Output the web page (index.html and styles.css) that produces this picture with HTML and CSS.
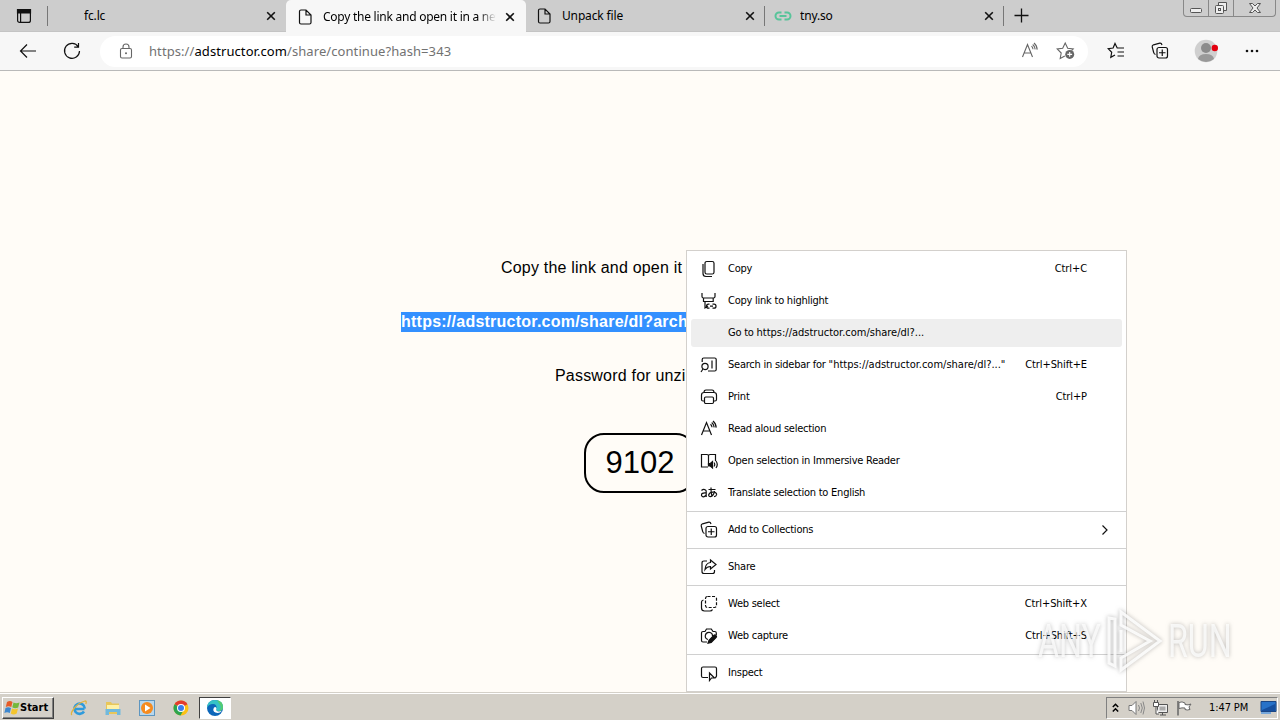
FILE: index.html
```html
<!DOCTYPE html>
<html lang="en">
<head>
    <meta charset="UTF-8">
    <meta name="viewport" content="width=device-width, initial-scale=1.0">
    <title>Copy the link and open it in a new tab</title>
    <link rel="stylesheet" href="styles.css">
</head>
<body>
    <svg class="sprite" aria-hidden="true">
        <symbol id="page" viewBox="0 0 14 16"><path d="M1.5 2.5a1.5 1.5 0 0 1 1.500-1.500h5l5 5v7.500a1.500 1.500 0 0 1-1.500 1.500H3a1.500 1.500 0 0 1-1.500-1.500zM8 1v5h5"/></symbol>
        <symbol id="close" viewBox="0 0 10 10"><path d="M1.200 1.200l7.600 7.600M8.800 1.200L1.200 8.800"/></symbol>
        <symbol id="aloud" viewBox="0 0 18 18"><path d="M1.500 15L6.500 2.500 11.500 15M3.200 11h6.600M10.500 4.200q1.400 1.200 1.500 3M11.700 2.500q2.300 1.800 2.500 4.900M13 1q3 2.500 3.200 6.600"/></symbol>
        <symbol id="collections" viewBox="0 0 18 18"><path d="M4.500 12.500Q3 12 2.700 10.500L1.200 4.800Q1 3.300 2.500 2.800L8.800 1.200Q10.500 1 11 3M8 5.500h6.500a2 2 0 0 1 2 2V14a2 2 0 0 1-2 2H8a2 2 0 0 1-2-2V7.500a2 2 0 0 1 2-2zM11.250 7.500v6.500M8 10.750h6.500"/></symbol>
    </svg>

    <div class="tab-strip">
        <div class="tab-actions">
            <svg width="16" height="16" viewBox="0 0 16 16"><rect x="1.600" y="1.600" width="12.800" height="12.800" rx="2"/><path class="solid" d="M1.500 1.500h13v3.500h-13z"/><path d="M4.600 5v9"/></svg>
        </div>
        <div class="tab">
            <span class="tab-icon"></span>
            <span class="tab-title">fc.lc</span>
            <svg class="tab-close"><use href="#close"/></svg>
        </div>
        <div class="tab active">
            <svg class="tab-icon"><use href="#page"/></svg>
            <span class="tab-title">Copy the link and open it in a new</span>
            <svg class="tab-close"><use href="#close"/></svg>
        </div>
        <div class="tab divided">
            <svg class="tab-icon"><use href="#page"/></svg>
            <span class="tab-title">Unpack file</span>
            <svg class="tab-close"><use href="#close"/></svg>
        </div>
        <div class="tab divided">
            <svg class="tab-icon link" viewBox="0 0 18 10"><path d="M7.500 1.500H5a3.500 3.500 0 0 0 0 7h2.500M10.500 1.500H13a3.500 3.500 0 0 1 0 7h-2.500M5.500 5h7"/></svg>
            <span class="tab-title">tny.so</span>
            <svg class="tab-close"><use href="#close"/></svg>
        </div>
        <svg class="new-tab" width="15" height="15" viewBox="0 0 15 15"><path d="M7.500 .5v14M.5 7.500h14"/></svg>
        <div class="window-buttons">
            <span><svg width="14" height="14" viewBox="0 0 14 14"><rect x="1.500" y="7.500" width="11" height="4" rx="1"/></svg></span>
            <span><svg width="14" height="14" viewBox="0 0 14 14"><path d="M4.500 4V1.500h8v8H10"/><rect x="1.500" y="4.500" width="8" height="8" rx="1"/><rect x="4.500" y="7.500" width="2" height="2"/></svg></span>
            <span><svg width="14" height="14" viewBox="0 0 14 14"><path d="M1.500 2.500h3L7 5l2.500-2.500h3L9 7l3.500 4.500h-3L7 9l-2.500 2.500h-3L5 7z"/></svg></span>
        </div>
    </div>

    <div class="toolbar">
        <svg class="back" width="18" height="16" viewBox="0 0 18 16"><path d="M8 1.500L1.500 8 8 14.500M1.500 8H17"/></svg>
        <svg class="reload" width="18" height="18" viewBox="0 0 18 18"><path d="M15.300 4.800A7.500 7.500 0 1 0 16.500 9M15.500 1v4.200h-4.300"/></svg>
        <div class="address-bar">
            <svg width="14" height="16" viewBox="0 0 14 16"><rect x="1.500" y="5.500" width="11" height="9.500" rx="1.500"/><path d="M4 5.500V4a3 3 0 0 1 6 0v1.500"/><circle class="dot" cx="7" cy="10.200" r="1"/></svg>
            <span class="url">https://<b>adstructor.com</b>/share/continue?hash=343</span>
            <svg class="read" width="18" height="18"><use href="#aloud"/></svg>
            <svg width="20" height="20" viewBox="0 0 20 20"><path d="M8.800 15.100L4.200 17.500l1-5.500-4-4 5.500-.8L9.200 2l2.500 5.200 5.500.8-1.600 1.600"/><circle class="badge" cx="13.700" cy="13.400" r="4.500"/><path class="badge-plus" d="M13.700 11v4.800M11.300 13.400h4.800"/></svg>
        </div>
        <svg class="favorites" width="18" height="18" viewBox="0 0 18 18"><path d="M8 12.900l-4.200 2.400.9-5L1.200 6.700l4.900-.7L8 1.500 10.200 6H17M10.500 10H17M10.500 14H17"/></svg>
        <svg class="collect" width="18" height="18"><use href="#collections"/></svg>
        <svg class="profile" width="26" height="24" viewBox="0 0 26 24"><circle cx="12" cy="12" r="11.300" fill="#cfcfcf"/><circle cx="12" cy="9" r="5" fill="#8b8b8b"/><path d="M4 20q1-5 8-5t8 5q-8 6-16 0" fill="#999"/><circle cx="20.800" cy="9" r="3.200" fill="#e3000f"/></svg>
        <svg class="more" width="14" height="4" viewBox="0 0 14 4"><circle cx="2" cy="2" r="1.300"/><circle cx="7" cy="2" r="1.300"/><circle cx="12" cy="2" r="1.300"/></svg>
    </div>

    <main class="content">
        <p class="intro">Copy the link and open it</p>
        <p class="link-row"><span class="selected">https://adstructor.com/share/dl?arch</span></p>
        <p class="password">Password for unzi</p>
        <div class="code">9102</div>
    </main>

    <div class="context-menu">
        <div class="item">
            <svg viewBox="0 0 18 18"><rect x="5" y="1.500" width="9" height="12.500" rx="1.800"/><path d="M3 4v9.500q0 3 3 3h6"/></svg>
            <span>Copy</span><kbd>Ctrl+C</kbd>
        </div>
        <div class="item">
            <svg viewBox="0 0 18 18"><path d="M2 1v3.500q0 1.500 1.500 1.500h10q1.500 0 1.500-1.500V1M3.500 6v3.500h9.700V6M5 9.500v6.500l3-2M9.500 12.200h-1a2 2 0 0 0 0 4h1M12.500 12.200h1.500a2 2 0 0 1 0 4h-1.500M10 14.200h3"/></svg>
            <span>Copy link to highlight</span>
        </div>
        <div class="item hover">
            <i></i><span>Go to <span class="target">https://adstructor.com/share/dl?...</span></span>
        </div>
        <div class="item">
            <svg viewBox="0 0 18 18"><path d="M2.200 6V3.500q0-1.500 1.500-1.500h11q1.500 0 1.500 1.500v10q0 1.500-1.500 1.500H8M12 4.500v8M3 13l-2 3"/><circle cx="5" cy="10.500" r="3.100"/></svg>
            <span>Search in sidebar for <span class="target">"https://adstructor.com/share/dl?..."</span></span><kbd>Ctrl+Shift+E</kbd>
        </div>
        <div class="item">
            <svg viewBox="0 0 18 18"><path d="M4 13H3q-1.500 0-1.500-1.500V7q0-2.500 2.500-2.500h10q2.500 0 2.500 2.500v4.500Q16.500 13 15 13h-1M4 4.500q0-2.500 2-2.500h6q2 0 2 2.500"/><rect x="4.500" y="9" width="9" height="6.500" rx="1.200"/></svg>
            <span>Print</span><kbd>Ctrl+P</kbd>
        </div>
        <div class="item">
            <svg><use href="#aloud"/></svg>
            <span>Read aloud selection</span>
        </div>
        <div class="item">
            <svg viewBox="0 0 18 18"><path d="M8 15H1.500V2.500H7q1.500 0 1.500 1.500v9M8.500 4q0-1.500 1.500-1.500h5.500V9M14 10.500q1.500 2 0 4M16 9q2.500 3.500 0 7"/><path class="solid" d="M8.500 11.500h1.800l2.200-2v6.500l-2.200-2H8.500z"/></svg>
            <span>Open selection in Immersive Reader</span>
        </div>
        <div class="item">
            <svg viewBox="0 0 18 18"><path d="M1.500 6.500Q3.500 4.500 5.500 6q.7.500.7 1.500v5.500M6.200 9Q1 8.500 1.500 11.500 3 14.500 6.200 11M8.500 5.500h7M11 3.500q-.2 5 1 9M14.500 7.200q-1 5-4 5.500-2 0-1.800-2 1-2.700 4.700-2.500 3.500.3 3.200 2.500-.5 2-2.600 2"/></svg>
            <span>Translate selection to English</span>
        </div>
        <hr>
        <div class="item">
            <svg><use href="#collections"/></svg>
            <span>Add to Collections</span>
            <svg class="arrow" viewBox="0 0 8 12"><path d="M1.500 1.500L6 6l-4.500 4.500"/></svg>
        </div>
        <hr>
        <div class="item">
            <svg viewBox="0 0 18 18"><path d="M7 3H4Q2 3 2 5v8.500q0 2 2 2h8.500q2 0 2-2V12M10.500 2l5.500 4.500-5.500 4.500V8.500Q7 8.500 5 11.500 5.500 5 10.500 4.500z"/></svg>
            <span>Share</span>
        </div>
        <hr>
        <div class="item">
            <svg viewBox="0 0 18 18"><rect x="5.500" y="1.500" width="11" height="11" rx="2" stroke-dasharray="3 1.500"/><path d="M3.500 5q-2 .5-2 2v6q0 3 3 3H10q1.800 0 2.500-1.500"/></svg>
            <span>Web select</span><kbd>Ctrl+Shift+X</kbd>
        </div>
        <div class="item">
            <svg viewBox="0 0 18 18"><path d="M7 15H3q-1.500 0-1.500-1.500V6q0-1.500 1.500-1.500h2L6.500 2h4.800L13 4.500h1.800q1.500 0 1.500 1.500v2M8 12.500A3.600 3.600 0 1 1 12.500 9"/><path class="solid" d="M8 16.200l1-3 5-5q1-.8 2 .2t.2 2l-5 5z"/></svg>
            <span>Web capture</span><kbd>Ctrl+Shift+S</kbd>
        </div>
        <hr>
        <div class="item">
            <svg viewBox="0 0 18 18"><path d="M8 13.500H3q-1.500 0-1.500-1.500V4.500Q1.500 3 3 3h12q1.500 0 1.500 1.500V12q0 1.300-1.500 1.500M9.500 9v7.500l2-2.500h3z"/></svg>
            <span>Inspect</span>
        </div>
    </div>

    <div class="watermark">
        <span>ANY</span>
        <svg width="60" height="64" viewBox="0 0 60 64"><path d="M4 9v45l6 3V10zM16 3v13l29 16-29 17v12l39-29zM16 21v22"/></svg>
        <span>RUN</span>
    </div>

    <div class="taskbar">
        <div class="start">
            <svg width="17" height="16" viewBox="0 0 17 16"><path fill="#e65b28" d="M3 2q3-2 5.500 0L7.300 7Q4.500 5.500 1.800 7z"/><path fill="#75b83b" d="M9.500 2.500Q12 4 15.500 2.500L14.200 7.500Q11 9 8.300 7.300z"/><path fill="#3d87cf" d="M1.500 8Q4 6.500 7 8l-1.200 5Q3 11.500.4 13z"/><path fill="#f4c52d" d="M8 8.500Q11 10 14 8.500l-1.300 5Q9.500 15.500 6.800 13.500z"/></svg>
            <span>Start</span>
        </div>
        <div class="quick-launch">
            <span><svg viewBox="0 0 18 18"><path d="M14.500 10H5M14 12.500a5.200 5.200 0 1 1 .8-3" fill="none" stroke="#2f9bdc" stroke-width="2.600"/><path d="M2 16Q0 15 4 9.500T15 2q2 0 .8 3" fill="none" stroke="#e2b340" stroke-width="1.300"/></svg></span>
            <span><svg viewBox="0 0 18 18"><path d="M2 3h5l1 1.500h7V15H2z" fill="#e8c65a"/><path d="M3 6h12v4H3z" fill="#fff1a6"/><path d="M1.500 10h15v6H13v-3H5v3H1.500z" fill="#71b9dd"/></svg></span>
            <span><svg viewBox="0 0 18 18"><rect x="1.500" y="1.500" width="15" height="15" fill="#b8d7ed" stroke="#5e96c0"/><circle cx="9" cy="9" r="6" fill="#f68b1f"/><path d="M7 5.500l5.500 3.500L7 12.500z" fill="#fff"/></svg></span>
            <span><svg viewBox="0 0 18 18"><circle cx="9" cy="9" r="7.500" fill="#fbc116"/><path d="M9 9L2.500 5.200A7.500 7.500 0 0 1 15.500 5.200z" fill="#e33b2e"/><path d="M9 9L2.500 5.200A7.500 7.500 0 0 0 8.500 16.500L12 10.500z" fill="#2da44f"/><circle cx="9" cy="9" r="4" fill="#fff"/><circle cx="9" cy="9" r="3" fill="#3b7ded"/></svg></span>
            <span class="running"><svg viewBox="0 0 18 18"><circle cx="9" cy="9" r="8" fill="#0c66b9"/><path d="M1 9Q1.500 1 9 1q8 .5 8 7 0 4-5 4-3-.5-1.500-2.500Q11 5 7 5 2.500 5 1 9z" fill="#35c2c6"/><path d="M10.500 9.500Q9 12 13 12.500l3-.7Q13 15 9.500 13.500T8 8.500Q10 7 10.500 9.500z" fill="#fff"/><path d="M11 1.200q6 1 6 6.800 0 4-4.500 4 4-3 1-7z" fill="#55cc70"/></svg></span>
        </div>
        <div class="tray">
            <svg width="7" height="10" viewBox="0 0 7 10"><path d="M.8 4l2.700-2.700L6.200 4M.8 8.500l2.700-2.700 2.700 2.700" fill="none" stroke="#000" stroke-width="1.500"/></svg>
            <svg width="17" height="16" viewBox="0 0 17 16"><path d="M1 5.500h3l4-4v13l-4-4H1z" fill="#fff" stroke="#777"/><path d="M10.500 5q2 3 0 6M12.800 3q3 5 0 10M15 1.500q3 6.500 0 13" fill="none" stroke="#888"/></svg>
            <svg width="17" height="16" viewBox="0 0 17 16"><path d="M5.500 4.500h10v8h-10zM8 15h6M10.500 12.500V15" fill="#eee" stroke="#555"/><path d="M7.500 6.500h6v4h-6z" fill="#aaa"/><path d="M1.500 2.500h5v4h-5zM2.500 0v2M5.500 0v2M4 6.500V14h3" fill="#fff" stroke="#555"/></svg>
            <svg width="17" height="16" viewBox="0 0 17 16"><path d="M2 1v14.500" stroke="#666" stroke-width="1.500"/><path d="M3 2.500q3-1.500 6 .5v1.500q3 1 6-.5l-2 3 1 2.500q-3 1-5 0V8Q6 7.500 3 8.500z" fill="#fff" stroke="#666"/></svg>
            <span class="clock">1:47 PM</span>
            <svg class="desktop" width="17" height="15" viewBox="0 0 17 15"><path d="M1 1.500h15v10H1z" fill="#2872c8" stroke="#1b4684"/><path d="M2 10L15 4v7H2z" fill="#164f9e"/><path d="M1 13h10" stroke="#76a7db" stroke-width="2"/></svg>
        </div>
    </div>
</body>
</html>
```
FILE: styles.css
```css
* {
    margin: 0;
    padding: 0;
    box-sizing: border-box;
}

body {
    width: 1280px;
    height: 720px;
    overflow: hidden;
    position: relative;
    display: flex;
    flex-direction: column;
    background: #fffcf7;
    color: #000;
    font-family: "Liberation Sans", Arial, sans-serif;
}

svg {
    display: block;
    flex: none;
    fill: none;
    stroke: #111;
    stroke-width: 1.2;
}

.solid {
    fill: #111;
}

.sprite {
    position: absolute;
    width: 0;
    height: 0;
}

/* Tabs */
.tab-strip {
    display: flex;
    height: 32px;
    flex: none;
    background: #cdcdcd;
    border-bottom: 1px solid #c4c4c4;
    font: 12px/32px "Noto Sans", sans-serif;
}

.tab-actions {
    width: 48px;
    padding: 8px 0 0 16px;
    position: relative;
}

.tab-actions::after,
.divided::after {
    content: "";
    position: absolute;
    right: 0;
    top: 6px;
    width: 1px;
    height: 20px;
    background: #777;
}

.tab {
    position: relative;
    display: flex;
    align-items: center;
    width: 239px;
    height: 32px;
    padding: 0 10px 0 11px;
}

.tab:nth-child(2) {
    width: 238px;
}

.tab.active {
    width: 240px;
    height: 33px;
    padding: 0 11px 0 12px;
    background: #f7f7f7;
    border-radius: 5px 5px 0 0;
}

.tab-icon {
    width: 14px;
    height: 16px;
    margin-right: 11px;
}

.tab-icon.link {
    width: 18px;
    height: 10px;
    margin: 0 8px 0 -2px;
    stroke: #58c49a;
    stroke-width: 2;
}

.tab-title {
    flex: 1;
    overflow: hidden;
    white-space: nowrap;
    margin-right: 9px;
    letter-spacing: -0.15px;
}

.tab.active .tab-title {
    letter-spacing: -0.25px;
    -webkit-mask-image: linear-gradient(to right, #000 90%, transparent 100%);
    mask-image: linear-gradient(to right, #000 90%, transparent 100%);
}

.tab-close {
    width: 10px;
    height: 10px;
    stroke-width: 1.6;
}

.new-tab {
    margin: 8px 0 0 10px;
    stroke-width: 1.3;
}

.window-buttons {
    display: flex;
    width: 93px;
    height: 17px;
    margin: 0 4px 0 auto;
    border: 1px solid #888;
    border-top: 0;
    border-radius: 0 0 4px 4px;
}

.window-buttons span {
    display: flex;
    justify-content: center;
    align-items: center;
    width: 25px;
    border-right: 1px solid #888;
}

.window-buttons span:last-child {
    flex: 1;
    border: 0;
}

.window-buttons svg {
    stroke: #555;
    stroke-width: 1;
    fill: #eee;
}

/* Toolbar */
.toolbar {
    display: flex;
    align-items: center;
    height: 39px;
    flex: none;
    padding-left: 19px;
    background: #f7f7f7;
    border-bottom: 1px solid #b9b9b9;
}

.reload {
    margin-left: 26px;
}

.address-bar {
    display: flex;
    align-items: center;
    width: 988px;
    height: 31px;
    margin-left: 19px;
    padding: 0 12px 0 19px;
    border-radius: 16px;
    background: #fff;
}

.address-bar svg {
    stroke: #666;
    stroke-width: 1.1;
}

.address-bar .dot,
.address-bar .badge {
    fill: #666;
    stroke: none;
}

.address-bar .badge-plus {
    stroke: #fff;
}

.url {
    flex: 1;
    margin-left: 16px;
    font: 13px/20px "Noto Sans", sans-serif;
    letter-spacing: 0.08px;
    color: #727272;
    white-space: nowrap;
}

.url b {
    font-weight: normal;
    color: #000;
}

.read {
    margin-right: 17px;
}

.favorites {
    margin-left: 19px;
}

.collect {
    margin-left: 26px;
}

.profile {
    margin-left: 25px;
    stroke: none;
}

.more {
    margin-left: 25px;
    fill: #111;
    stroke: none;
}

/* Page */
.content {
    flex: 1;
    padding-top: 187px;
    font-size: 16px;
    line-height: 20px;
    white-space: nowrap;
}

.content p {
    margin-bottom: 34px;
}

.intro {
    padding-left: 501px;
    letter-spacing: 0.2px;
}

.link-row {
    padding-left: 401px;
}

.selected {
    display: block;
    width: 286px;
    overflow: hidden;
    background: #3390ff;
    color: #fff;
    font-weight: bold;
    letter-spacing: 0.24px;
}

.content .password {
    padding-left: 555px;
    margin-bottom: 47px;
    letter-spacing: 0.2px;
}

.code {
    width: 112px;
    height: 60px;
    margin-left: 584px;
    border: 2px solid #000;
    border-radius: 20px;
    font-size: 31px;
    line-height: 55px;
    text-align: center;
}

/* Context menu */
.context-menu {
    position: absolute;
    left: 686px;
    top: 250px;
    width: 441px;
    height: 442px;
    display: flex;
    flex-direction: column;
    padding: 2px 4px;
    border: 1px solid #d3d0cc;
    background: #fff;
    font: 11px/28px "DejaVu Sans Condensed", "DejaVu Sans", sans-serif;
    font-stretch: condensed;
    letter-spacing: -0.24px;
}

.item {
    display: flex;
    align-items: center;
    flex: none;
    height: 28px;
    margin: 2px 0;
    padding: 0 35px 0 9px;
    border-radius: 3px;
    white-space: nowrap;
}

.item.hover {
    background: #eee;
}

.item svg,
.item i {
    width: 18px;
    height: 18px;
    margin-right: 10px;
}

.item kbd {
    margin-left: auto;
    font: inherit;
    letter-spacing: -0.1px;
}

.target {
    letter-spacing: 0;
}

.item .arrow {
    width: 8px;
    height: 12px;
    margin: 0 -22px 0 auto;
}

.context-menu hr {
    flex: none;
    height: 1px;
    margin: 2px -4px;
    border: 0;
    background: #d0d0d0;
}

/* Watermark */
.watermark {
    position: absolute;
    left: 1038px;
    top: 609px;
    width: 194px;
    height: 64px;
    display: flex;
    align-items: center;
    justify-content: space-between;
    color: rgba(255, 255, 255, 0.75);
    font: 46px/64px Roboto, sans-serif;
    filter: drop-shadow(0 0 2px rgba(90, 90, 90, 0.5));
}

.watermark span {
    width: 64px;
    transform: scaleX(0.7);
    transform-origin: left;
}

.watermark svg {
    stroke: rgba(255, 255, 255, 0.85);
    stroke-width: 3;
}

/* Taskbar */
.taskbar {
    position: relative;
    display: flex;
    align-items: center;
    height: 28px;
    flex: none;
    padding: 3px 2px 1px;
    background: #d4d0c8;
    border-top: 1px solid #d4d0c8;
    box-shadow: inset 0 1px #fff;
    font: 11px/20px "DejaVu Sans Condensed", "DejaVu Sans", sans-serif;
    font-stretch: condensed;
}

.taskbar svg {
    stroke-width: 1;
    stroke: none;
}

.start {
    display: flex;
    align-items: center;
    width: 52px;
    height: 22px;
    padding-left: 1px;
    border: 1px solid;
    border-color: #fff #404040 #404040 #fff;
    box-shadow: inset -1px -1px #808080;
    font-weight: bold;
    letter-spacing: 0;
}

.start svg {
    margin-right: -1px;
}

.quick-launch {
    display: flex;
    margin-left: 8px;
}

.quick-launch span {
    display: flex;
    align-items: center;
    justify-content: center;
    width: 34px;
    height: 22px;
}

.quick-launch svg {
    width: 18px;
    height: 18px;
}

.quick-launch .running {
    width: 32px;
    margin-left: 1px;
    background: #fff;
    border: 1px solid;
    border-color: #404040 #fff #fff #404040;
}

.tray {
    display: flex;
    align-items: center;
    width: 172px;
    height: 22px;
    margin-left: auto;
    padding-left: 5px;
    border: 1px solid;
    border-color: #808080 #fff #fff #808080;
}

.tray svg {
    margin-right: 7px;
}

.tray svg:first-child {
    margin-right: 9px;
}

.clock {
    flex: 1;
    margin-left: 9px;
    letter-spacing: -0.1px;
    white-space: nowrap;
}

.tray .desktop {
    margin-right: 0;
}
```
